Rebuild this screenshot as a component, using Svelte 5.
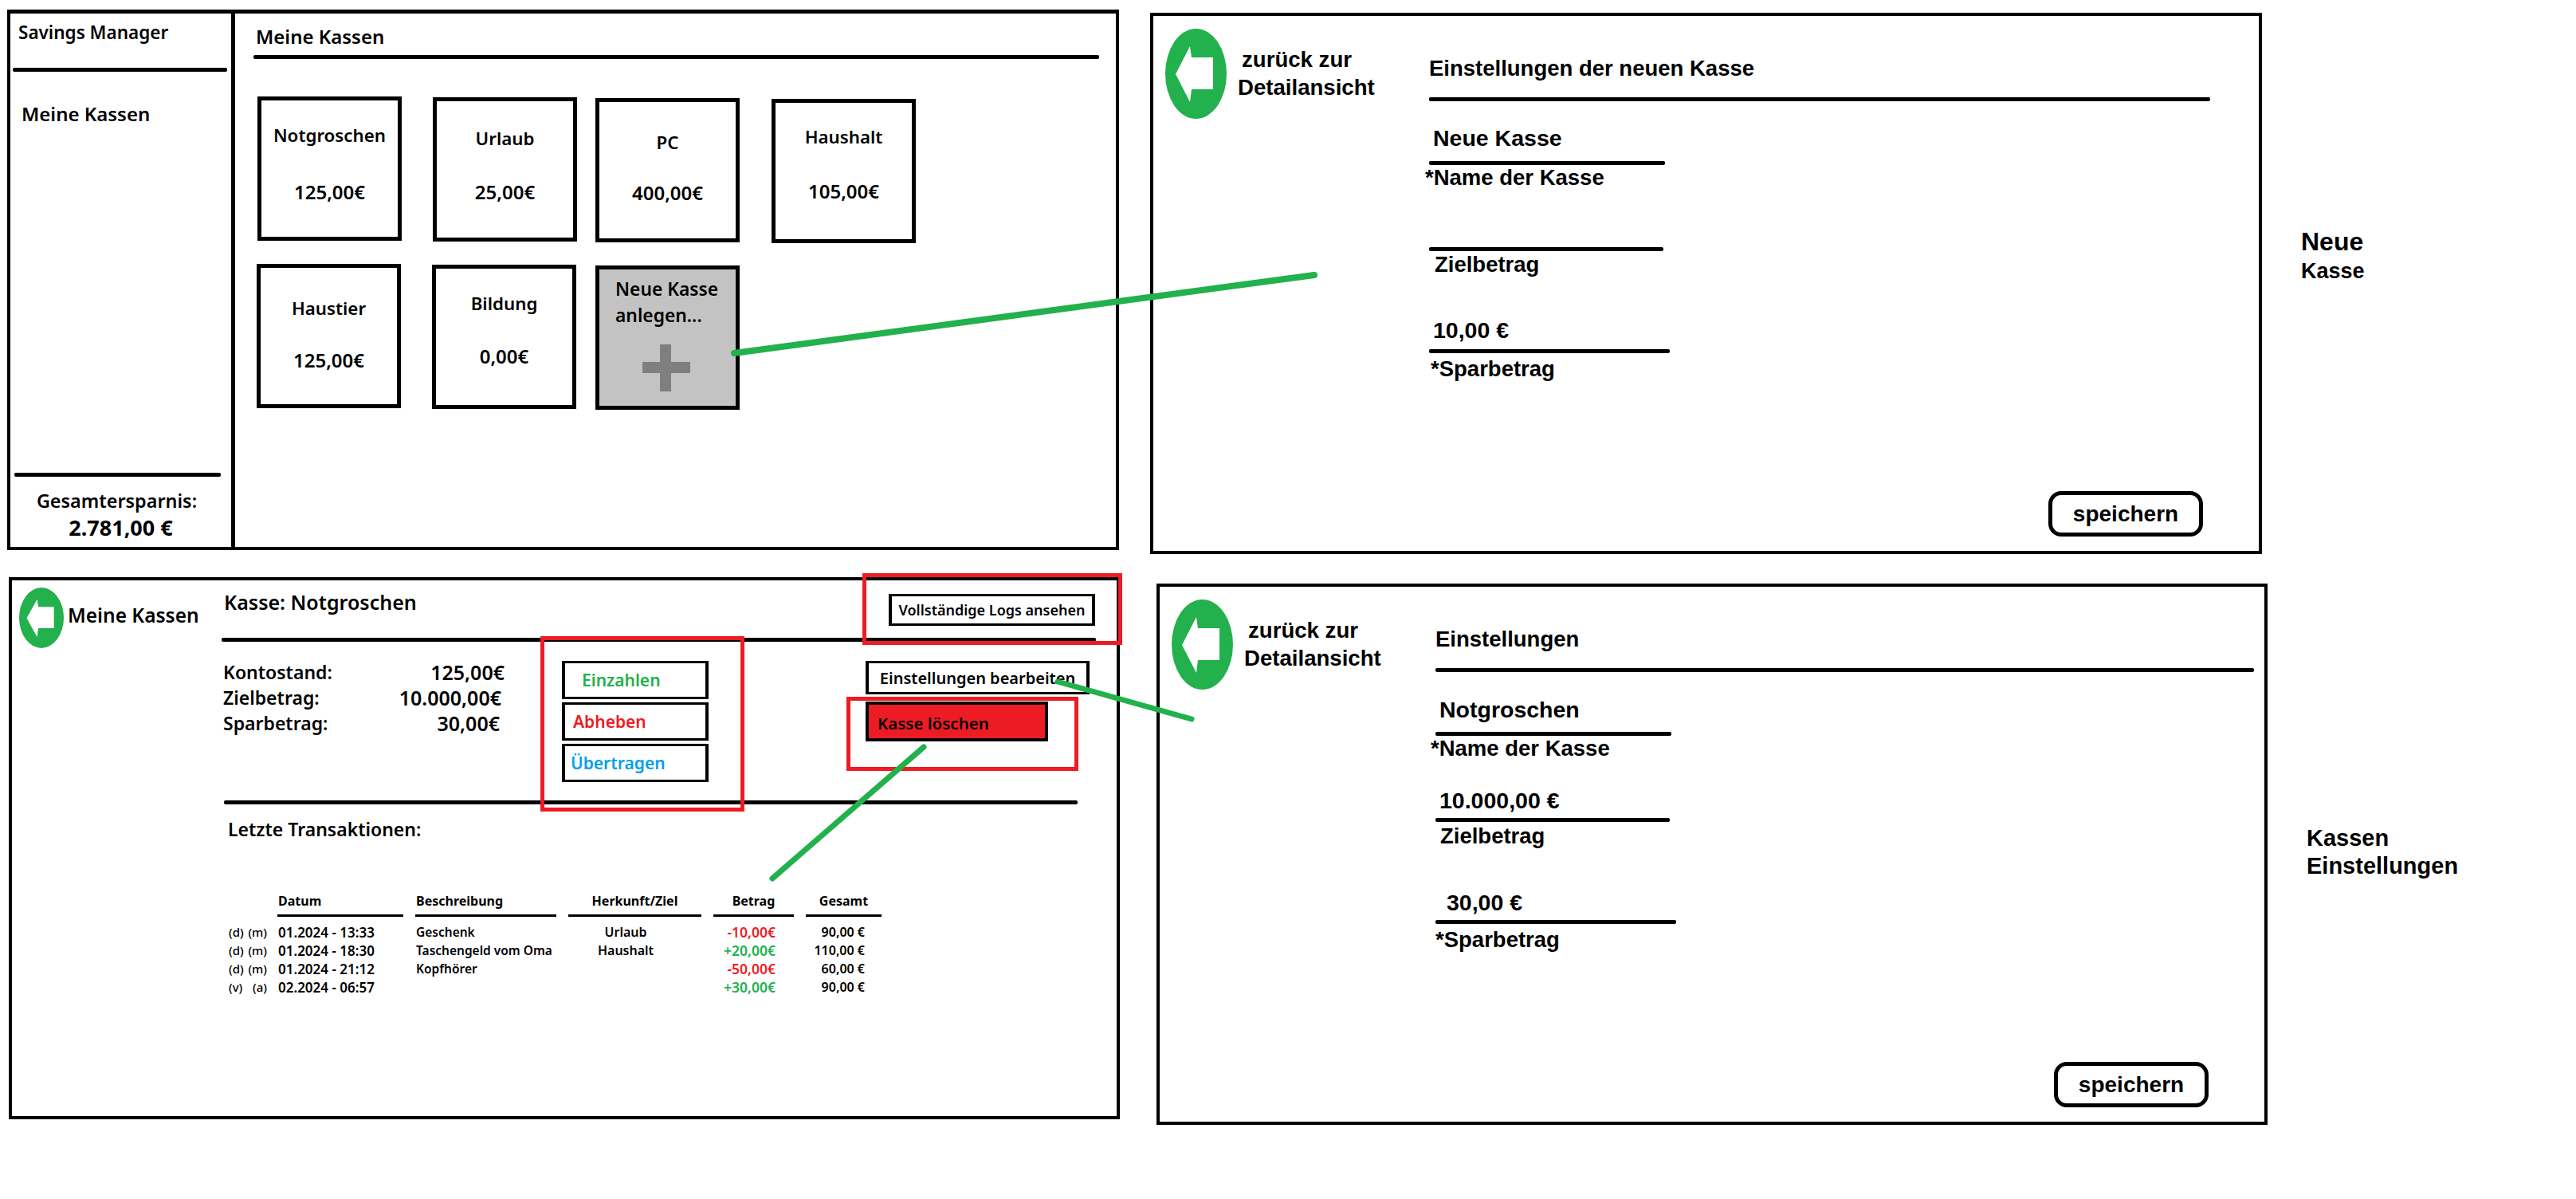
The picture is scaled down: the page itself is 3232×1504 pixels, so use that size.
<script>
const cardRows = [
  [
    { name: 'Notgroschen', amount: '125,00€', x: 5, y: 0, nameY: 49, amountY: 120 },
    { name: 'Urlaub', amount: '25,00€', x: 39, y: 1, nameY: 52, amountY: 119 },
    { name: 'PC', amount: '400,00€', x: 23, y: 2, nameY: 56, amountY: 119 },
    { name: 'Haushalt', amount: '105,00€', x: 40, y: 3, nameY: 48, amountY: 116 }
  ],
  [
    { name: 'Haustier', amount: '125,00€', x: 4, y: 0, nameY: 56, amountY: 121 },
    { name: 'Bildung', amount: '0,00€', x: 39, y: 1, nameY: 49, amountY: 115 }
  ]
]

const stats = [
  { label: 'Kontostand:', value: '125,00€', nudge: 0 },
  { label: 'Zielbetrag:', value: '10.000,00€', nudge: 4 },
  { label: 'Sparbetrag:', value: '30,00€', nudge: 6 }
]

const actions = [
  { label: 'Einzahlen', kind: 'in', indent: 21 },
  { label: 'Abheben', kind: 'out', indent: 10 },
  { label: 'Übertragen', kind: 'move', indent: 7 }
]

const transactions = [
  { flags: ['(d)', '(m)'], date: '01.2024 - 13:33', text: 'Geschenk', target: 'Urlaub', amount: '-10,00€', total: '90,00 €' },
  { flags: ['(d)', '(m)'], date: '01.2024 - 18:30', text: 'Taschengeld vom Oma', target: 'Haushalt', amount: '+20,00€', total: '110,00 €' },
  { flags: ['(d)', '(m)'], date: '01.2024 - 21:12', text: 'Kopfhörer', target: '', amount: '-50,00€', total: '60,00 €' },
  { flags: ['(v)', '(a)'], date: '02.2024 - 06:57', text: '', target: '', amount: '+30,00€', total: '90,00 €' }
]

const newFields = [
  { value: 'Neue Kasse', label: '*Name der Kasse', height: 75, pad: 13, width: 296, valueX: 5, labelX: -5, labelY: 3 },
  { value: '', label: 'Zielbetrag', height: 67, pad: 8, width: 294, valueX: 5, labelX: 7, labelY: 4 },
  { value: '10,00 €', label: '*Sparbetrag', height: 87, pad: 8, width: 302, valueX: 5, labelX: 2, labelY: 7 }
]

const editFields = [
  { value: 'Notgroschen', label: '*Name der Kasse', height: 75, pad: 12, width: 296, valueX: 5, labelX: -6, labelY: 3 },
  { value: '10.000,00 €', label: 'Zielbetrag', height: 67, pad: 6, width: 294, valueX: 5, labelX: 6, labelY: 5 },
  { value: '30,00 €', label: '*Sparbetrag', height: 87, pad: 6, width: 302, valueX: 14, labelX: 0, labelY: 7 }
]
</script>

{#snippet backIcon()}
  <svg class="back-icon" viewBox="0 0 77 113" preserveAspectRatio="none" aria-hidden="true">
    <ellipse cx="38.5" cy="56.5" rx="38.5" ry="56.5" fill="#22b14c" />
    <polygon points="13,57 31,22 33,36 60,36 60,76 33,76 31,92" fill="#fff" />
  </svg>
{/snippet}

{#snippet formPanel(cls, title, fields)}
  <section class="window form-window {cls}">
    <div class="form-back">
      {@render backIcon()}
      <div class="form-back-text"><span class="back-first">zurück zur</span><br />Detailansicht</div>
    </div>
    <div class="form-main">
      <h2 class="form-title">{title}</h2>
      <div class="rule form-rule"></div>
      {#each fields as field}
        <div class="field">
          <div class="field-value" style="height: {field.height}px; padding-bottom: {field.pad}px; padding-left: {field.valueX}px">{field.value}</div>
          <div class="rule" style="width: {field.width}px"></div>
          <div class="field-label" style="margin-left: {field.labelX}px; padding-top: {field.labelY}px">{field.label}</div>
        </div>
      {/each}
      <button class="save">speichern</button>
    </div>
  </section>
{/snippet}

<div class="canvas">
  <section class="window overview">
    <aside class="sidebar">
      <div class="brand">Savings Manager</div>
      <div class="rule side-rule"></div>
      <div class="nav-item">Meine Kassen</div>
      <div class="side-footer">
        <div class="rule foot-rule"></div>
        <div class="total-label">Gesamtersparnis:</div>
        <div class="total-value">2.781,00 €</div>
      </div>
    </aside>
    <div class="overview-main">
      <h2 class="overview-title">Meine Kassen</h2>
      <div class="rule overview-rule"></div>
      {#each cardRows as row, r}
        <div class="card-row">
          {#each row as card}
            <div class="card" style="margin-left: {card.x}px; margin-top: {card.y}px; padding-top: {card.nameY - 20}px">
              <div class="card-name">{card.name}</div>
              <div class="card-amount" style="margin-top: {card.amountY - card.nameY - 30}px">{card.amount}</div>
            </div>
          {/each}
          {#if r === 1}
            <div class="card card-new">
              <div class="card-new-text">Neue Kasse<br />anlegen...</div>
              <svg class="plus" viewBox="0 0 60 59" aria-hidden="true">
                <rect x="22" y="0" width="14" height="59" fill="#7f7f7f" />
                <rect x="0" y="22" width="60" height="14" fill="#7f7f7f" />
              </svg>
            </div>
          {/if}
        </div>
      {/each}
    </div>
  </section>

  {@render formPanel('form-new', 'Einstellungen der neuen Kasse', newFields)}

  <section class="window detail">
    <div class="detail-back">
      {@render backIcon()}
      <span>Meine Kassen</span>
    </div>
    <div class="detail-main">
      <header class="detail-head">
        <h2 class="detail-title">Kasse: Notgroschen</h2>
        <button class="logs">Vollständige Logs ansehen</button>
      </header>
      <div class="rule detail-rule"></div>
      <div class="detail-body">
        <div class="stats">
          {#each stats as stat}
            <div class="stat">
              <span>{stat.label}</span>
              <span class="stat-value" style="padding-right: {stat.nudge}px">{stat.value}</span>
            </div>
          {/each}
        </div>
        <div class="actions">
          {#each actions as action}
            <button class="action {action.kind}" style="padding-left: {action.indent}px">{action.label}</button>
          {/each}
        </div>
        <div class="manage">
          <button class="edit">Einstellungen bearbeiten</button>
          <button class="delete">Kasse löschen</button>
        </div>
      </div>
      <div class="rule lower-rule"></div>
      <h3 class="recent">Letzte Transaktionen:</h3>
      <div class="table">
        <div></div>
        <div class="th th-left">Datum</div>
        <div class="th th-left">Beschreibung</div>
        <div class="th">Herkunft/Ziel</div>
        <div class="th">Betrag</div>
        <div class="th">Gesamt</div>
        {#each transactions as tx, i}
          <div class="td flags"><span>{tx.flags[0]}</span><span>{tx.flags[1]}</span></div>
          <div class="td date">{tx.date}</div>
          <div class="td desc">{tx.text}</div>
          <div class="td target">{tx.target}</div>
          <div class="td amount" class:plus-amount={i % 2 === 1}>{tx.amount}</div>
          <div class="td total">{tx.total}</div>
        {/each}
      </div>
    </div>
  </section>

  {@render formPanel('form-edit', 'Einstellungen', editFields)}

  <div class="note note-new"><strong>Neue</strong><br />Kasse</div>
  <div class="note note-edit">Kassen<br />Einstellungen</div>

  <div class="mark mark-logs"></div>
  <div class="mark mark-actions"></div>
  <div class="mark mark-delete"></div>

  <svg class="arrows" viewBox="0 0 3232 1504" aria-hidden="true">
    <line class="thick" x1="921" y1="443" x2="1649" y2="345" />
    <line x1="1327" y1="855" x2="1495" y2="902" />
    <line x1="1159" y1="937" x2="969" y2="1102" />
  </svg>
</div>

<style>
:global(body) {
  background: #fff;
}

.canvas {
  position: relative;
  width: 3232px;
  height: 1504px;
  overflow: hidden;
  background: #fff;
  color: #000;
  font-family: "Noto Sans", sans-serif;
  font-weight: 600;
}

.canvas *, .canvas *::before {
  box-sizing: border-box;
}

h2, h3 {
  margin: 0;
  font: inherit;
}

button {
  font: inherit;
  color: inherit;
  background: #fff;
  padding: 0;
}

.window {
  position: absolute;
  border: 4px solid #000;
  background: #fff;
}

.rule {
  height: 5px;
  background: #000;
  border-radius: 2px;
}

/* overview window */
.overview {
  left: 9px;
  top: 12px;
  width: 1395px;
  height: 678px;
  display: grid;
  grid-template-columns: 282px 1fr;
  border-top-width: 5px;
}

.sidebar {
  display: flex;
  flex-direction: column;
  border-right: 5px solid #000;
}

.brand {
  height: 68px;
  padding: 9px 0 0 10px;
  font-size: 22.5px;
  line-height: 30px;
}

.side-rule {
  width: 269px;
  margin-left: 3px;
}

.nav-item {
  margin: 38px 0 0 14px;
  font-size: 24px;
  line-height: 30px;
}

.side-footer {
  margin-top: auto;
  padding-bottom: 9px;
  text-align: center;
}

.foot-rule {
  width: 259px;
  margin: 0 0 15px 5px;
}

.total-label {
  font-size: 23.4px;
  line-height: 30px;
  padding-right: 10px;
}

.total-value {
  margin-top: 4px;
  font-size: 27px;
  line-height: 30px;
  font-weight: 700;
}

.overview-main {
  padding: 14px 0 0 23px;
}

.overview-title {
  height: 38px;
  padding-left: 3px;
  font-size: 24px;
  line-height: 30px;
}

.overview-rule {
  width: 1061px;
  margin-bottom: 47px;
}

.card-row {
  display: flex;
  align-items: flex-start;
  height: 184px;
  margin-bottom: 26px;
}

.card {
  width: 181px;
  height: 181px;
  border: 5px solid #000;
  text-align: center;
  font-size: 22.3px;
  line-height: 30px;
}

.card-amount {
  font-size: 24px;
}

.card-new {
  margin: 2px 0 0 24px;
  padding: 8px 0 0 20px;
  background: #c3c3c3;
  text-align: left;
  font-size: 22.8px;
  line-height: 33px;
}

.card-new-text {
  white-space: nowrap;
}

.plus {
  display: block;
  width: 60px;
  height: 59px;
  margin: 20px 0 0 34px;
}

/* settings windows */
.form-window {
  display: grid;
  grid-template-columns: 346px 1fr;
  height: 679px;
}

.form-new {
  left: 1443px;
  top: 16px;
  width: 1395px;
}

.form-edit {
  left: 1451px;
  top: 732px;
  width: 1394px;
}

.form-edit .form-rule {
  width: 1027px;
}

.form-window, .note {
  font-family: "Liberation Sans", sans-serif;
  font-weight: 700;
}

.form-back {
  display: flex;
  gap: 14px;
  padding: 16px 0 0 15px;
}

.form-back .back-icon {
  width: 77px;
  height: 113px;
}

.form-back-text {
  padding-top: 21px;
  font-size: 27.6px;
  line-height: 35px;
  white-space: nowrap;
}

.back-first {
  margin-left: 5px;
}

.form-main {
  display: flex;
  flex-direction: column;
  min-width: 0;
  padding-right: 70px;
}

.form-title {
  height: 102px;
  padding-top: 51px;
  font-size: 27.5px;
  line-height: 30px;
}

.form-rule {
  width: 980px;
  flex: none;
}

.field-value {
  display: flex;
  align-items: flex-end;
  font-size: 28.5px;
  line-height: 32px;
}

.field-label {
  height: 36px;
  font-size: 27.5px;
  line-height: 26px;
  white-space: nowrap;
}

.save {
  align-self: flex-end;
  width: 194px;
  height: 57px;
  margin: auto 0 18px;
  border: 5px solid #000;
  border-radius: 16px;
  font-size: 28px;
}

.note {
  position: absolute;
  font-size: 29px;
  line-height: 35px;
}

.note-new {
  left: 2887px;
  top: 286px;
  font-size: 27px;
}

.note-new strong {
  font-size: 32px;
}

.note-edit {
  left: 2894px;
  top: 1034px;
}

/* detail window */
.detail {
  left: 11px;
  top: 724px;
  width: 1394px;
  height: 680px;
  display: grid;
  grid-template-columns: 263px 1fr;
}

.detail-back {
  display: flex;
  align-items: flex-start;
  gap: 5px;
  padding: 9px 0 0 9px;
  font-size: 24.5px;
  white-space: nowrap;
}

.detail-back .back-icon {
  flex: none;
  width: 56px;
  height: 76px;
}

.detail-back span {
  padding-top: 20px;
  line-height: 30px;
}

.detail-main {
  min-width: 0;
}

.detail-head {
  display: flex;
  justify-content: space-between;
  align-items: flex-start;
  width: 1097px;
  height: 72px;
  padding: 17px 1px 0 3px;
}

.detail-title {
  margin-top: -5px;
  font-size: 25px;
  line-height: 30px;
}

.logs {
  width: 259px;
  height: 40px;
  border: 3px solid #000;
  border-width: 3px 4px;
  font-size: 18px;
  white-space: nowrap;
}

.detail-rule {
  width: 1097px;
}

.detail-body {
  display: grid;
  grid-template-columns: 427px 381px 1fr;
  height: 199px;
}

.stats {
  padding: 22px 0 0 2px;
  font-size: 23px;
  line-height: 32px;
}

.stat {
  display: flex;
  justify-content: space-between;
  width: 353px;
}

.stat-value {
  font-size: 25px;
}

.actions {
  display: flex;
  flex-direction: column;
  gap: 4px;
  padding-top: 24px;
}

.action {
  width: 184px;
  height: 48px;
  border: 3px solid #000;
  border-width: 3px 4px;
  text-align: left;
  font-size: 21px;
}

.action.in { color: #22b14c; }
.action.out { color: #ed1c24; }
.action.move { color: #00a2e8; }

.manage {
  display: flex;
  flex-direction: column;
  align-items: flex-start;
  gap: 9px;
  padding-top: 24px;
}

.edit {
  width: 281px;
  height: 42px;
  border: 3px solid #000;
  border-width: 3px 4px;
  font-size: 20px;
  white-space: nowrap;
}

.delete {
  width: 229px;
  height: 50px;
  padding: 4px 0 0 11px;
  border: 4px solid #000;
  background: #ed1c24;
  text-align: left;
  font-size: 20.5px;
}

.lower-rule {
  width: 1071px;
  margin-left: 3px;
}

.recent {
  margin: 16px 0 0 8px;
  font-size: 23px;
  line-height: 30px;
}

.table {
  display: grid;
  grid-template-columns: 47px 158px 177px 167px 101px 95px;
  grid-template-rows: 39px;
  grid-auto-rows: 23px;
  column-gap: 15px;
  margin: 64px 0 0 8px;
  font-size: 16px;
  line-height: 23px;
  white-space: nowrap;
}

.th {
  height: 31px;
  border-bottom: 3px solid #000;
  text-align: center;
  font-weight: 700;
}

.th-left {
  text-align: left;
  padding-left: 1px;
}

.flags {
  display: flex;
  justify-content: space-between;
  margin-right: -2px;
  font-size: 15px;
  font-weight: 500;
}

.td {
  padding-left: 1px;
}

.date {
  font-size: 17px;
}

.desc {
  font-size: 15.5px;
}

.target {
  padding-right: 24px;
  text-align: center;
}

.amount {
  padding-right: 23px;
  text-align: right;
  font-size: 17.5px;
  color: #ed1c24;
}

.plus-amount {
  color: #22b14c;
}

.total {
  padding-right: 21px;
  text-align: right;
}

/* annotations drawn over the wireframes */
.mark {
  position: absolute;
  border: 5px solid #ed1c24;
}

.mark-logs {
  left: 1082px;
  top: 719px;
  width: 326px;
  height: 90px;
}

.mark-actions {
  left: 678px;
  top: 798px;
  width: 256px;
  height: 220px;
}

.mark-delete {
  left: 1062px;
  top: 874px;
  width: 291px;
  height: 93px;
}

.arrows {
  position: absolute;
  inset: 0;
  width: 3232px;
  height: 1504px;
  pointer-events: none;
}

.arrows line {
  stroke: #22b14c;
  stroke-width: 7;
  stroke-linecap: round;
}

.arrows .thick {
  stroke-width: 8;
}
</style>
